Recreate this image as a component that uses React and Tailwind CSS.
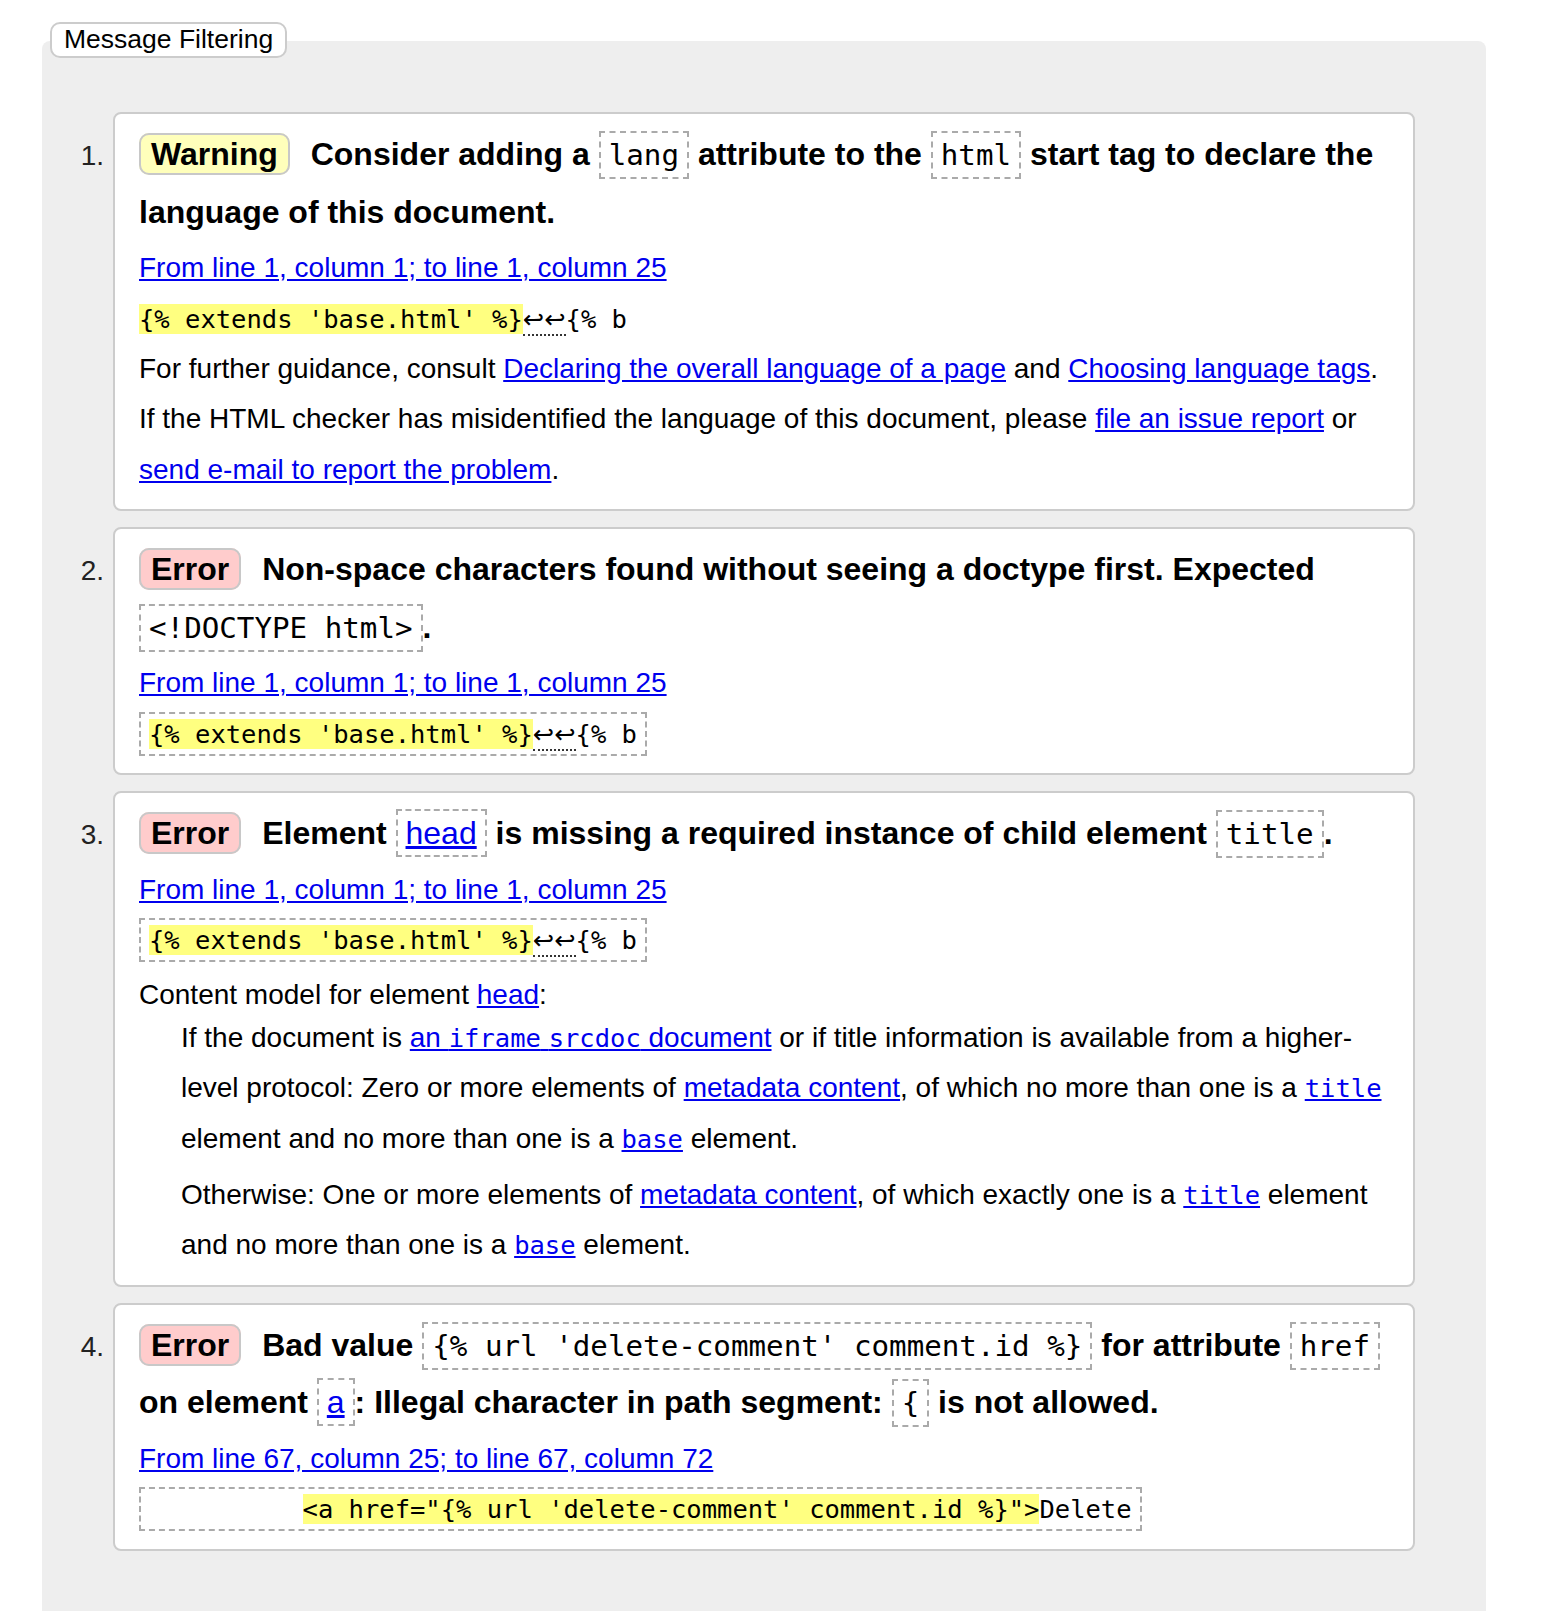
const SANS = "font-['Liberation_Sans',Arial,sans-serif]";
const MONO = "font-['DejaVu_Sans_Mono',monospace]";

function Badge({ kind }) {
  const bg = kind === 'Warning' ? 'bg-[#ffffbb]' : 'bg-[#ffcccc]';
  return (
    <strong className={`${bg} border-2 border-[#c8c8c8] rounded-[10px] px-[10px] py-[1px] mr-[12px]`}>
      {kind}
    </strong>
  );
}

function HCode({ children }) {
  return (
    <code className={`${MONO} text-[29.2px] font-normal border-2 border-dashed border-[#aaa] px-[8px] py-[5px]`}>
      {children}
    </code>
  );
}

function HLink({ children }) {
  return (
    <span className="font-normal border-2 border-dashed border-[#aaa] px-[8px] py-[4px]">
      <a href="#" className="text-[#0000ee] underline">{children}</a>
    </span>
  );
}

function Link({ children, mono }) {
  return (
    <a href="#" className={`text-[#0000ee] underline ${mono ? MONO + ' text-[25.5px]' : ''}`}>
      {children}
    </a>
  );
}

function Extract({ boxed, lead = '', hl, arrows = true, end }) {
  const box = boxed ? 'border-2 border-dashed border-[#aaa] px-[8px] py-[5px]' : '';
  return (
    <p className="text-[28px] leading-[1.8]">
      <code className={`${MONO} text-[25.5px] whitespace-pre ${box}`}>
        {lead}
        <span className="bg-[#ffff80]">{hl}</span>
        {arrows && (
          <span className="font-['DejaVu_Sans',sans-serif] border-b-2 border-dotted border-[#333]">↩↩</span>
        )}
        {end}
      </code>
    </p>
  );
}

function Location({ children }) {
  return (
    <p className="text-[28px] leading-[1.8]">
      <Link>{children}</Link>
    </p>
  );
}

function Item({ n, children }) {
  return (
    <div className="flex items-baseline">
      <div className="w-[71px] shrink-0 text-right pr-[9px] text-[28px] text-[#222]">{n}.</div>
      <div className="flex-1 bg-white border-2 border-[#cccccc] rounded-[8px] pl-[24px] pr-[20px] pt-[12px] pb-[14px]">
        {children}
      </div>
    </div>
  );
}

function Heading({ children }) {
  return <p className="text-[32px] font-bold leading-[1.8] mb-[2px]">{children}</p>;
}

export default function App() {
  return (
    <div className={`${SANS} bg-white min-h-[1611px] text-black pl-[42px] pt-[22px]`}>
      <div>
        <div className="ml-[8px] relative z-10 inline-flex h-[36px] items-center px-[12px] border-2 border-[#cccccc] rounded-[10px] bg-white text-[26.5px]">
          Message Filtering
        </div>
      </div>
      <div className="-mt-[17px] w-[1444px] bg-[#eeeeee] rounded-[8px] pt-[71px] pb-[71px] pr-[71px] flex flex-col gap-[16px]">
        <Item n={1}>
          <Heading>
            <Badge kind="Warning" /> Consider adding a <HCode>lang</HCode> attribute to the <HCode>html</HCode> start tag to declare the language of this document.
          </Heading>
          <Location>From line 1, column 1; to line 1, column 25</Location>
          <Extract hl="{% extends 'base.html' %}" end="{% b" />
          <p className="text-[28px] leading-[1.8]">
            For further guidance, consult <Link>Declaring the overall language of a page</Link> and <Link>Choosing language tags</Link>.
          </p>
          <p className="text-[28px] leading-[1.8]">
            If the HTML checker has misidentified the language of this document, please <Link>file an issue report</Link> or <Link>send e-mail to report the problem</Link>.
          </p>
        </Item>

        <Item n={2}>
          <Heading>
            <Badge kind="Error" /> Non-space characters found without seeing a doctype first. Expected <HCode>{'<!DOCTYPE html>'}</HCode>.
          </Heading>
          <Location>From line 1, column 1; to line 1, column 25</Location>
          <Extract boxed hl="{% extends 'base.html' %}" end="{% b" />
        </Item>

        <Item n={3}>
          <Heading>
            <Badge kind="Error" /> Element <HLink>head</HLink> is missing a required instance of child element <HCode>title</HCode>.
          </Heading>
          <Location>From line 1, column 1; to line 1, column 25</Location>
          <Extract boxed hl="{% extends 'base.html' %}" end="{% b" />
          <p className="text-[28px] leading-[1.8] mt-[5px]">
            Content model for element <Link>head</Link>:
          </p>
          <div className="pl-[42px] -mt-[8px]">
            <p className="text-[28px] leading-[1.8]">
              If the document is <a href="#" className="text-[#0000ee] underline">an <span className={`${MONO} text-[25.5px]`}>iframe</span> <span className={`${MONO} text-[25.5px]`}>srcdoc</span> document</a> or if title information is available from a higher-level protocol: Zero or more elements of <Link>metadata content</Link>, of which no more than one is a <Link mono>title</Link> element and no more than one is a <Link mono>base</Link> element.
            </p>
            <p className="text-[28px] leading-[1.8] mt-[6px]">
              Otherwise: One or more elements of <Link>metadata content</Link>, of which exactly one is a <Link mono>title</Link> element and no more than one is a <Link mono>base</Link> element.
            </p>
          </div>
        </Item>

        <Item n={4}>
          <Heading>
            <Badge kind="Error" /> Bad value <HCode>{"{% url 'delete-comment' comment.id %}"}</HCode> for attribute <HCode>href</HCode> on element <HLink>a</HLink>: Illegal character in path segment: <HCode>{'{'}</HCode> is not allowed.
          </Heading>
          <Location>From line 67, column 25; to line 67, column 72</Location>
          <Extract
            boxed
            lead="          "
            hl={`<a href="{% url 'delete-comment' comment.id %}">`}
            arrows={false}
            end="Delete"
          />
        </Item>
      </div>
    </div>
  );
}
